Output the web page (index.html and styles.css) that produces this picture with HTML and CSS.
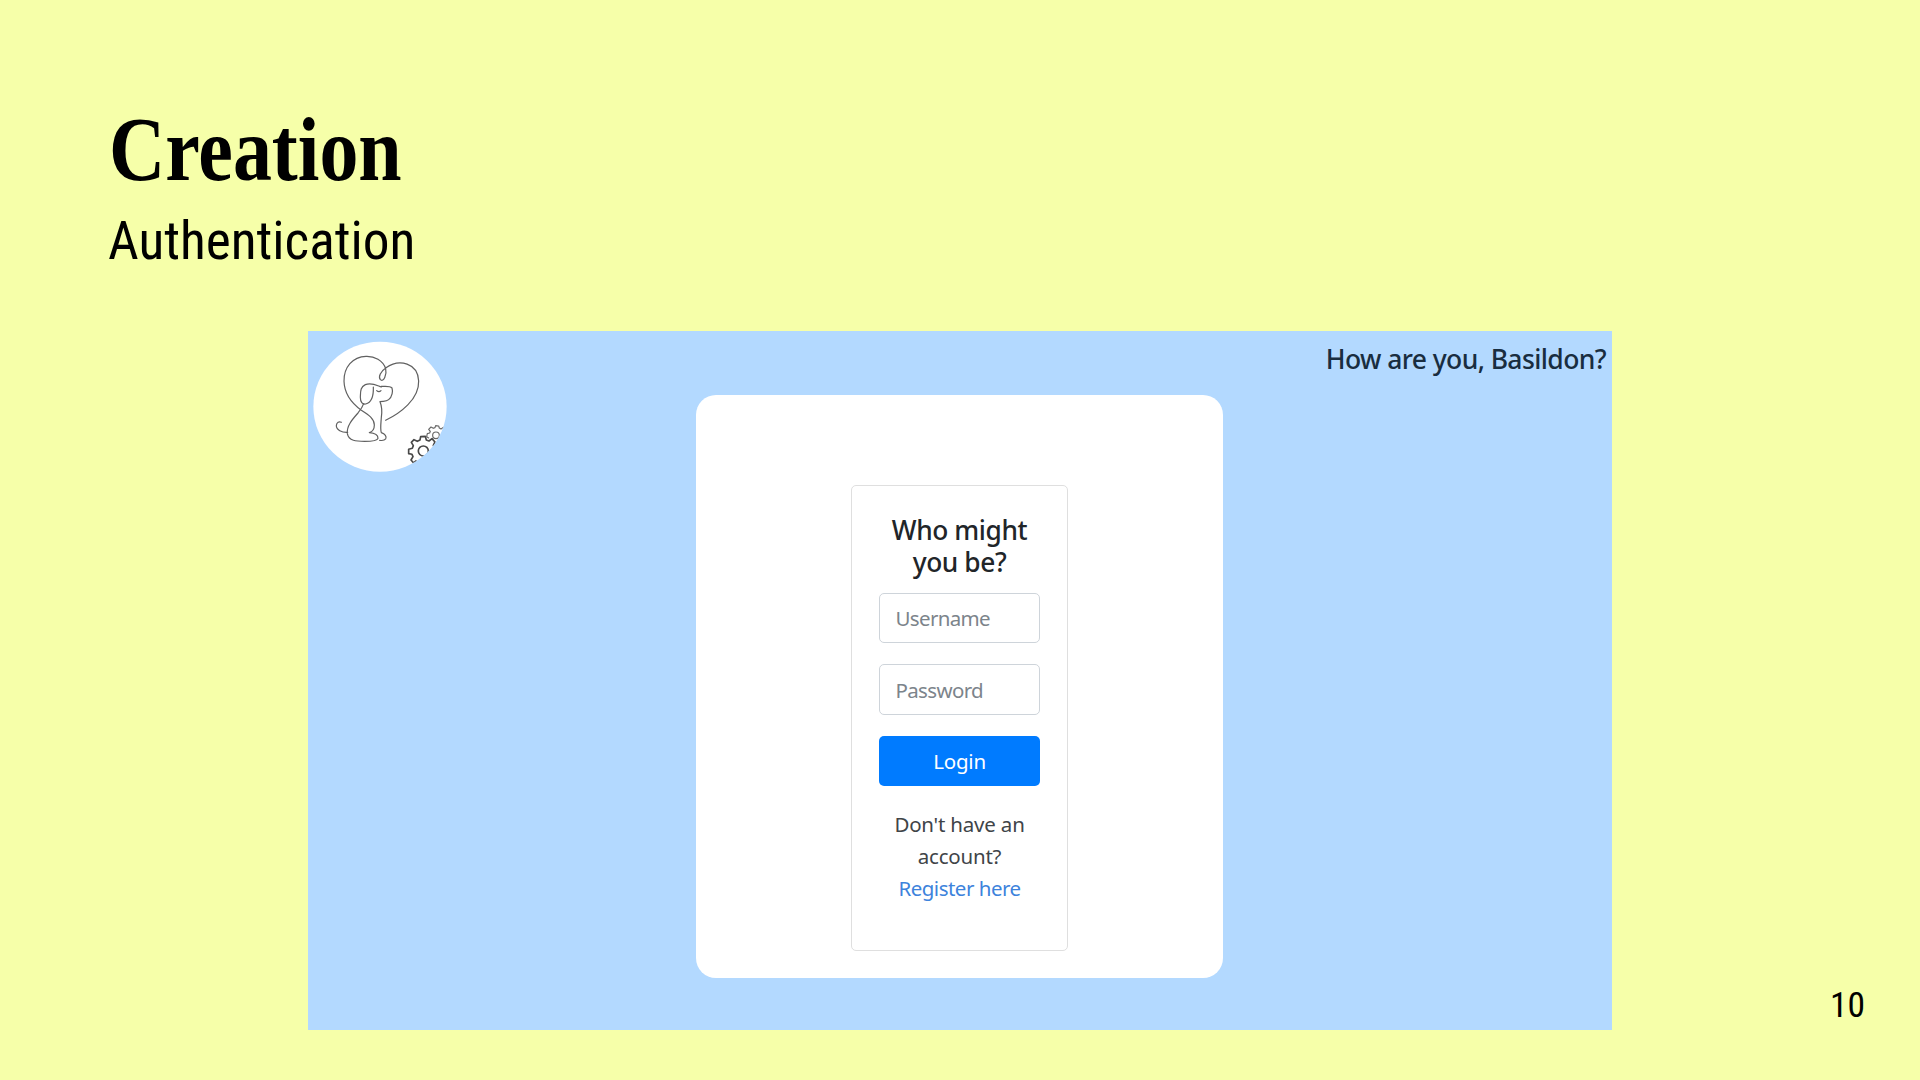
FILE: index.html
```html
<!DOCTYPE html>
<html lang="en">
<head>
<meta charset="utf-8">
<title>Creation – Authentication</title>
<link rel="stylesheet" href="styles.css">
</head>
<body>
<main class="slide">
  <header class="heading">
    <h1 class="title">Creation</h1>
    <p class="subtitle">Authentication</p>
  </header>
  <section class="screen">
    <svg class="logo" viewBox="39 46 402 394" fill="none" stroke-linecap="round" stroke-linejoin="round" aria-label="Dog logo">
      <defs><clipPath id="disc"><ellipse cx="240" cy="243" rx="200" ry="195"/></clipPath></defs>
      <ellipse cx="240" cy="243" rx="200" ry="195" fill="#fff"/>
      <g stroke="#606060" stroke-width="3.6">
        <path d="M257 284C300 263 358 221 356 166C354 112 298 98 258 126C242 137 234 153 241 162C251 171 261 146 257 129C249 104 223 91 198 92C158 93 131 125 132 167C133 207 158 235 184 254C207 268 223 280 223 298C223 311 218 318 208 321C222 322 234 328 234 338C232 346 213 347 194 347C169 347 146 346 142 324C139 300 160 278 174 262C184 250 188 243 191 234"/>
        <path d="M244 184C230 179 214 169 196 177C180 185 182 198 181 215C181 229 187 237 197 235C213 231 221 211 220 184"/>
        <path d="M244 182C257 183 269 180 276 187C279 196 277 213 266 222C257 230 248 225 240 228C248 247 246 260 244 275C243 293 240 309 244 321C255 325 261 333 257 340C253 345 245 345 239 344"/>
        <path d="M230 195Q237 201 243 195M143 320C126 321 108 313 109 299C110 290 117 286 124 290"/>
      </g>
      <g clip-path="url(#disc)" stroke="#484848" stroke-width="5">
        <circle cx="370" cy="376" r="15"/>
        <path d="M348 406L341 412L333 403L339 393L336 386L326 384V371L337 368L340 360L334 350L342 342L352 347L360 343L362 333L376 332L379 343L387 346L396 339L405 349L400 359L404 367"/>
        <g stroke="#686868" stroke-width="3.5"><circle cx="408" cy="329" r="10"/>
        <path d="M386 337L380 333L382 324L389 322L391 317L386 311L393 304L400 308L405 306L407 300L416 301L418 307L423 310L431 305"/></g>
      </g>
    </svg>
    <div class="card">
      <form class="login">
        <h2 class="question">Who might<br>you be?</h2>
        <div class="field">Username</div>
        <div class="field second">Password</div>
        <div class="button">Login</div>
        <p class="register">Don't have an<br>account?<br><a>Register here</a></p>
      </form>
    </div>
    <p class="greeting">How are you, Basildon?</p>
  </section>
  <footer class="page">10</footer>
</main>
</body>
</html>
```
FILE: styles.css
```css
* { box-sizing: border-box; }
body { margin: 0; background: #f6ffa9; }
h1, h2, p { margin: 0; font-weight: inherit; }
.slide { position: relative; width: 1920px; height: 1080px; overflow: hidden; }
.heading { height: 331px; padding: 98px 0 0 109px; color: #000; }
.title { width: max-content; font: bold 90px/104px "Liberation Serif", serif; transform: scaleX(.865); transform-origin: 0 0; }
.subtitle { width: max-content; margin-left: -1px; padding-top: 1px; font: 400 53.3px/76px Roboto, sans-serif; font-stretch: 75%; }
.screen { display: grid; grid-template-columns: 388px 527px 389px; width: 1304px; height: 699px; margin-left: 308px; background: #b3d9ff; font-family: "Noto Sans", sans-serif; color: #212529; }
.logo { width: 134px; height: 131.3px; margin: 10px 0 0 5px; }
.card { height: 583px; margin-top: 64px; padding: 90px 155px 0; background: #fff; border-radius: 20px; }
.login { height: 466px; padding: 27px; border: 1px solid #dfdfdf; border-radius: 5px; }
.question { height: 79.5px; padding-top: .5px; font: 500 26.3px/32px "Noto Sans", sans-serif; letter-spacing: -.4px; text-align: center; white-space: nowrap; }
.field { display: flex; align-items: center; height: 50px; padding: 1px 0 0 15.5px; border: 1px solid #ced4da; border-radius: 5px; font-size: 20.5px; letter-spacing: -.65px; color: #7c848b; }
.second { margin-top: 21px; height: 51px; }
.button { display: flex; align-items: center; justify-content: center; height: 50px; margin-top: 21px; background: #007bff; border-radius: 5px; color: #fff; font-size: 20.5px; letter-spacing: -.2px; }
.register { margin-top: 22.5px; font-size: 20.5px; line-height: 32px; letter-spacing: -.2px; text-align: center; white-space: nowrap; color: #404448; }
.register a { color: #3d83dc; letter-spacing: -.5px; }
.greeting { justify-self: end; width: max-content; margin: 9px 6px 0 0; font-size: 26.5px; line-height: 38px; font-weight: 500; letter-spacing: -.6px; white-space: nowrap; color: #192d40; }
.page { position: absolute; right: 55px; top: 984px; font: 400 35.5px/42px Roboto, sans-serif; font-stretch: 75%; color: #000; }
```
